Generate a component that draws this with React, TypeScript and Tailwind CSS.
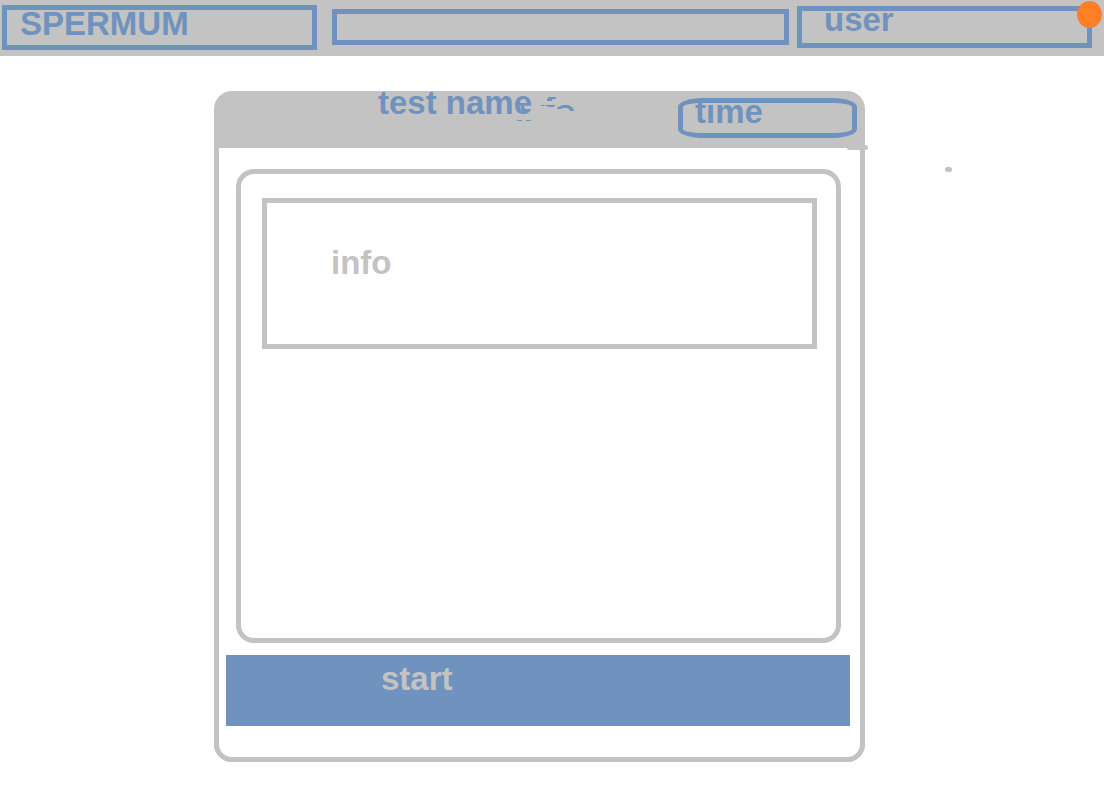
function InkMarks() {
  return (
    <svg
      className="absolute left-[300px] top-0 text-[#7092be]"
      width="64"
      height="36"
      viewBox="514 91 64 36"
      fill="currentColor"
      aria-hidden="true"
    >
      <path d="M517 120h5v1h-5zM526 120h5v1h-5z" />
      <path d="M521 106h3l1 3h5v1h-2l-1 2h-4l-2-3z" />
      <path d="M541 105h3v1h-3zM545 105h10v1h-1v1h-6v-1h-3z" />
      <path d="M547 101v-2l2-2h7v2h-3l-1 1v1z" />
      <path d="M557 109v-1l3-2 3-1h5l4 2 2 3v1h-4l-2-3h-5l-2 1z" />
    </svg>
  );
}

export default function App() {
  return (
    <div className="bg-white font-['Liberation_Sans',Arial,sans-serif] text-[33px] font-bold text-[#7092be]">
      <header className="grid h-14 grid-cols-[330fr_465fr_295fr] items-start bg-[#c3c3c3] pl-0.5 pr-3">
        <a
          href="#home"
          className="mr-[15px] mt-[5px] h-[45px] border-5 border-[#7092be] pl-[13px] leading-7"
        >
          SPERMUM
        </a>
        <input
          type="text"
          aria-label="Search"
          className="mr-2 mt-[9px] h-9 min-w-0 border-5 border-[#7092be] px-2 text-base outline-none"
        />
        <a
          href="#user"
          className="relative mt-1.5 h-[42px] border-5 border-[#7092be] pl-[22px] leading-[18px]"
        >
          user
          <span className="absolute -right-[15px] -top-2.5 h-[27px] w-[25px] rounded-[50%] bg-[#ff7f27]" />
        </a>
      </header>

      <main className="pb-8 pl-[214px] pr-[239px] pt-[35px]">
        <section className="relative rounded-[18px] bg-[#c3c3c3]">
          <div className="flex h-[57px] items-start justify-between pl-[164px] pr-2">
            <h1 className="leading-6">test name</h1>
            <div className="mt-[7px] h-10 w-[179px] rounded-[24px/9px] border-5 border-[#7092be] pl-3 leading-[18px]">
              time
            </div>
          </div>
          <InkMarks />

          <div className="rounded-b-[18px] border-x-5 border-b-5 border-[#c3c3c3] bg-white pb-[31px] pl-[7px] pr-2.5 pt-[21px]">
            <div className="ml-2.5 mr-[9px] h-[474px] rounded-[18px] border-5 border-[#c3c3c3] pl-[21px] pr-[19px] pt-6">
              <div className="h-[151px] border-5 border-[#c3c3c3] pl-16 pt-12 leading-6 text-[#c3c3c3]">
                info
              </div>
            </div>
            <button
              type="button"
              className="mt-3 flex h-[71px] w-full items-start bg-[#7092be] pl-[155px] pt-3 leading-6 text-[#c3c3c3]"
            >
              start
            </button>
          </div>

          <span className="absolute -right-[3px] top-[54px] h-[5px] w-[21px] rounded-full bg-[#c3c3c3]" />
          <span className="absolute -right-[87px] top-[76px] h-[5px] w-[7px] rounded-full bg-[#c3c3c3]" />
        </section>
      </main>
    </div>
  );
}
